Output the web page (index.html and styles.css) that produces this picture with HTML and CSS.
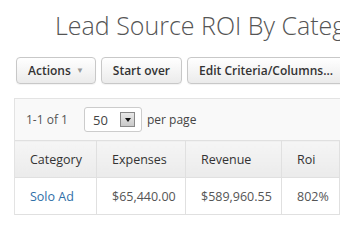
FILE: index.html
```html
<!DOCTYPE html>
<html lang="en">
<head>
    <meta charset="UTF-8">
    <title>Lead Source ROI By Category</title>
    <link rel="stylesheet" href="styles.css">
</head>
<body>
    <div class="page">
        <h1 class="report-title">Lead Source ROI By Category</h1>

        <div class="toolbar">
            <button class="btn">Actions <span class="caret">&#9660;</span></button>
            <button class="btn">Start over</button>
            <button class="btn">Edit Criteria/Columns...</button>
        </div>

        <div class="report-panel">
            <div class="pager">
                <span class="pager-count">1-1 of 1</span>
                <div class="page-size">
                    <span class="page-size-value">50</span>
                    <span class="page-size-arrow"><span class="tri"></span></span>
                </div>
                <span class="pager-label">per page</span>
            </div>
            <table class="report-table">
                <thead>
                    <tr>
                        <th class="col-cat">Category</th>
                        <th class="col-exp">Expenses</th>
                        <th class="col-rev">Revenue</th>
                        <th class="col-roi">Roi</th>
                        <th class="col-more"></th>
                    </tr>
                </thead>
                <tbody>
                    <tr>
                        <td><a href="#">Solo Ad</a></td>
                        <td>$65,440.00</td>
                        <td>$589,960.55</td>
                        <td>802%</td>
                        <td></td>
                    </tr>
                </tbody>
            </table>
        </div>
    </div>
</body>
</html>
```

FILE: styles.css
```css
body {
    margin: 0;
    background: #fff;
    font-family: 'Open Sans', sans-serif;
    color: #333;
    overflow: hidden;
}

.page {
    width: 480px;
}

/* Title */
.report-title {
    margin: 0;
    padding: 8px 0 0 55px;
    font-size: 25px;
    font-weight: 300;
    color: #555;
    white-space: nowrap;
    line-height: 34px;
}

/* Button bar */
.toolbar {
    display: flex;
    gap: 5px;
    margin: 15px 0 0 16px;
}

.btn {
    height: 27px;
    padding: 0 11px;
    font-family: 'Open Sans', sans-serif;
    font-size: 12px;
    font-weight: 600;
    color: #333;
    background: linear-gradient(#ffffff, #ebebeb);
    border: 1px solid #c8c8c8;
    border-radius: 4px;
    white-space: nowrap;
    box-shadow: 0 1px 1px rgba(0,0,0,0.05);
}

.btn .caret {
    font-size: 8px;
    color: #999;
    vertical-align: 2px;
    margin-left: 2px;
}

/* Report panel */
.report-panel {
    margin: 14px 0 0 14px;
    border: 1px solid #e3e3e3;
    border-bottom: none;
    background: #f9f9f9;
}

.pager {
    display: flex;
    align-items: center;
    height: 41px;
    padding-left: 11px;
    font-size: 12px;
    color: #555;
}

.pager-count {
    width: 58px;
}

.page-size {
    display: flex;
    align-items: center;
    width: 56px;
    height: 23px;
    background: #fff;
    border: 1px solid #ccc;
    border-radius: 3px;
    margin-right: 5px;
}

.page-size-value {
    flex-grow: 1;
    padding-left: 8px;
    font-size: 13px;
    color: #444;
}

.page-size-arrow {
    display: flex;
    justify-content: center;
    align-items: center;
    width: 13px;
    height: 13px;
    margin-right: 6px;
    background: linear-gradient(#e8e8e8, #c9c9c9);
    border: 1px solid #888;
}

.page-size-arrow .tri {
    border-left: 3px solid transparent;
    border-right: 3px solid transparent;
    border-top: 4px solid #111;
}

.pager-label {
    color: #444;
}

/* Table */
.report-table {
    border-collapse: collapse;
    table-layout: fixed;
    background: #fff;
}

.report-table th,
.report-table td {
    border: 1px solid #e0e0e0;
    padding: 0 0 0 15px;
    text-align: left;
    font-size: 12.5px;
    white-space: nowrap;
}

.report-table tr > :first-child {
    border-left: none;
}

.report-table th {
    height: 36px;
    font-weight: normal;
    color: #333;
    background: linear-gradient(#f5f5f5, #ebebeb);
}

.report-table td {
    height: 36px;
    color: #555;
}

.report-table a {
    color: #2f6fa8;
    text-decoration: none;
}

.col-cat { width: 66px; }
.col-exp { width: 73px; }
.col-rev { width: 80px; }
.col-roi { width: 42px; }
.col-more { width: 60px; }
```
